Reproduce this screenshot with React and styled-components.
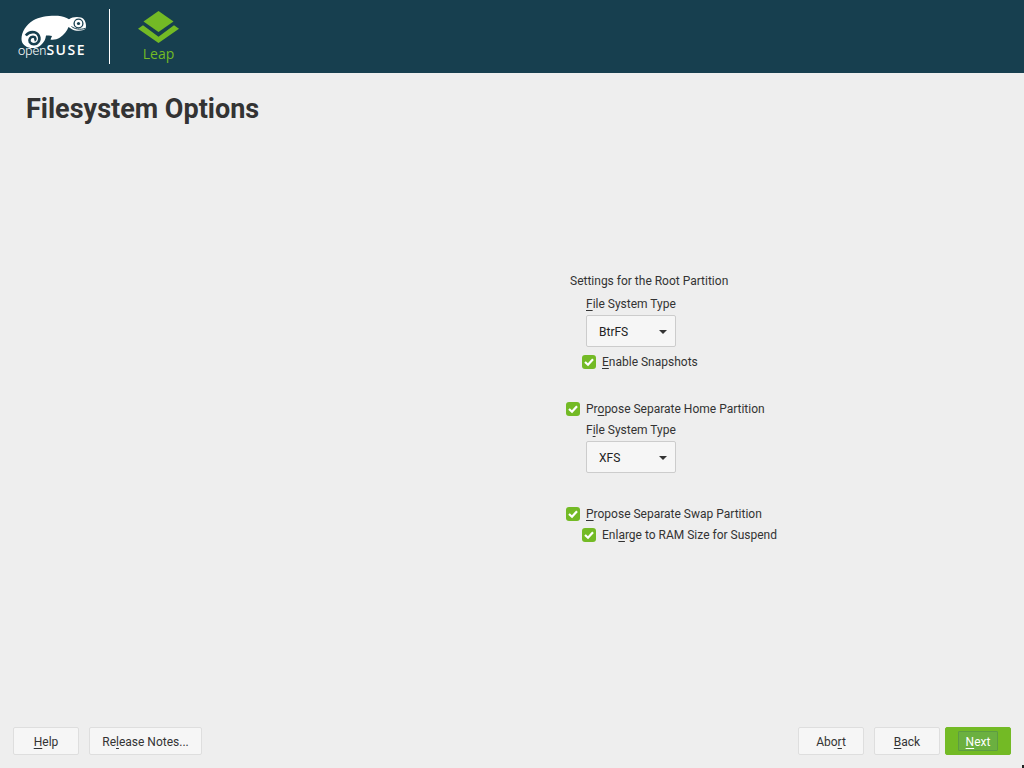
import React from "react";
import styled, { createGlobalStyle } from "styled-components";

const GlobalStyle = createGlobalStyle`
  html, body {
    margin: 0;
    padding: 0;
    background: #eeeeee;
  }
`;

const Page = styled.div`
  position: relative;
  width: 1024px;
  height: 768px;
  display: flex;
  flex-direction: column;
  overflow: hidden;
  background: #eeeeee;
  color: #333333;
  font-family: Roboto, "Liberation Sans", sans-serif;
  font-size: 12px;
`;

const Header = styled.header`
  height: 73px;
  flex: none;
  display: flex;
  align-items: center;
  background: #173f4f;
`;

const SuseLogo = styled.div`
  position: relative;
  width: 109px;
  height: 73px;
  flex: none;
`;

const LogoText = styled.span`
  position: absolute;
  left: 18px;
  top: 43px;
  color: #fff;
  font-size: 13px;
  font-weight: 300;
  line-height: 14px;
  white-space: nowrap;
`;

const SuseBold = styled.b`
  font-family: "Open Sans", sans-serif;
  font-size: 14px;
  font-weight: 600;
  letter-spacing: 1.5px;
`;

const Divider = styled.div`
  width: 1px;
  height: 55px;
  margin-top: -1px;
  background: #fff;
`;

const LeapLogo = styled.div`
  width: 41px;
  margin: 1px 0 0 28px;
  display: flex;
  flex-direction: column;
  align-items: center;
`;

const LeapText = styled.span`
  color: #73ba25;
  font-family: "Open Sans", sans-serif;
  font-size: 14px;
  line-height: 18px;
  margin-top: 2px;
`;

const Title = styled.h1`
  margin: 0;
  padding: 20px 26px 0;
  height: 52px;
  flex: none;
  color: #333333;
  font-size: 27px;
  font-weight: 700;
  line-height: 32px;
`;

const Main = styled.main`
  flex: 1;
  padding: 126px 0 0 566px;
`;

const Section = styled.section`
  display: flex;
  flex-direction: column;
  margin-top: ${(props) => props.top || 0}px;
`;

const Plain = styled.div`
  height: 20px;
  line-height: 20px;
  margin-top: ${(props) => props.top || 0}px;
  padding-left: ${(props) => props.indent || 0}px;
  white-space: nowrap;
`;

const Combo = styled.div`
  box-sizing: border-box;
  width: 90px;
  height: 32px;
  margin: 1px 0 0 20px;
  padding: 1px 12px 0;
  display: flex;
  align-items: center;
  justify-content: space-between;
  background: #f6f6f6;
  border: 1px solid #cccccc;
  border-radius: 2px;
  color: #222222;
`;

const Caret = styled.span`
  width: 0;
  height: 0;
  margin-right: -4px;
  border-left: 4px solid transparent;
  border-right: 4px solid transparent;
  border-top: 4px solid #333333;
`;

const CheckRow = styled.div`
  height: 20px;
  margin-top: ${(props) => props.top || 0}px;
  padding-left: ${(props) => props.indent || 0}px;
  display: flex;
  align-items: center;
  gap: 6px;
  white-space: nowrap;
`;

const Box = styled.span`
  width: 14px;
  height: 14px;
  flex: none;
  display: flex;
  align-items: center;
  justify-content: center;
  border-radius: 3px;
  background: #73ba25;
`;

const Key = styled.span`
  text-decoration: underline;
  text-underline-offset: 2px;
`;

const Footer = styled.footer`
  flex: none;
  display: flex;
  align-items: center;
  padding: 0 13px 13px;
`;

const Button = styled.button`
  box-sizing: border-box;
  height: 28px;
  width: ${(props) => props.w}px;
  margin-left: ${(props) => props.gap || 0}px;
  padding: 1px 0 0;
  display: flex;
  align-items: center;
  justify-content: center;
  background: #f6f6f6;
  border: 1px solid #dedede;
  border-radius: 2px;
  color: #333333;
  font: inherit;
`;

const Primary = styled(Button)`
  padding: 0;
  background: #73ba25;
  border-color: #73ba25;
  color: #ffffff;
`;

const FocusRect = styled.span`
  box-sizing: border-box;
  width: 40px;
  height: 20px;
  padding-top: 1px;
  display: flex;
  align-items: center;
  justify-content: center;
  background: #6bb040;
  border: 1px solid #5d9c42;
  border-radius: 1px;
`;

const Spacer = styled.div`
  flex: 1;
`;

// mouse pointer tip left in the bottom right corner of the screen
const PointerTip = styled.span`
  position: absolute;
  right: 0;
  bottom: 0;
  width: 2px;
  height: 3px;
  background: #222222;
`;

const Check = () => (
  <svg width="10" height="10" viewBox="0 0 10 10">
    <path d="M1 5 L4 7.8 L9 2.2" fill="none" stroke="#fff" strokeWidth="2.2" />
  </svg>
);

const Chameleon = () => (
  <svg width="109" height="73" viewBox="0 0 109 73">
    <path
      fill="#fff"
      d="M21.5 39 C21.5 32 26 25 33 20.5 C40 16.5 50 15.3 58 15.8 C62.5 16 66 17.5 69 19.3 C72 17 77 16.3 81 17.5 C84.5 18.8 86 22 86 26 C86 28 85 29.5 83.5 30 C80 31.3 75 31 72 29.3 L68.5 27 C67 31 64 35 60 37.5 C57 39.5 53 40 50.5 39.5 L52 36 C50 35.5 48 35.5 46 35.5 C45.5 39 44.5 41.5 42 44 C39 47.5 34.5 48.5 30.5 48 C25.5 47 21.5 44 21.5 39 Z"
    />
    <path
      fill="none"
      stroke="#173f4f"
      strokeWidth="2.6"
      d="M34.5 40.5 C36 40 35.8 37 33.5 36.8 C30.3 36.4 28.6 39.7 29.8 42.2 C31.5 45 36.3 45 38.3 42 C40.8 38.5 38.8 33.3 34.5 32.3 C31 31.6 27.8 33 25.8 35.5"
    />
    <circle cx="78.5" cy="23.5" r="4.4" fill="#fff" stroke="#173f4f" strokeWidth="1.3" />
    <circle cx="78.5" cy="23.5" r="1.6" fill="#173f4f" />
    <path fill="none" stroke="#173f4f" strokeWidth="1" d="M71.5 26.5 C74.5 29 80 30 85 28.5" />
  </svg>
);

const LeapMark = () => (
  <svg width="41" height="32" viewBox="139 11 41 32">
    <path fill="#73ba25" d="M159.5 11 L174.5 21.5 L159.5 32 L144.5 21.5 Z" />
    <path fill="#73ba25" d="M139 28.7 L144 25.3 L159.5 36.7 L175 25.3 L180 28.7 L159.5 43 Z" />
  </svg>
);

const App = () => {
  return (
    <Page>
      <GlobalStyle />
      <Header>
        <SuseLogo>
          <Chameleon />
          <LogoText>
            open<SuseBold>SUSE</SuseBold>
          </LogoText>
        </SuseLogo>
        <Divider />
        <LeapLogo>
          <LeapMark />
          <LeapText>Leap</LeapText>
        </LeapLogo>
      </Header>
      <Title>Filesystem Options</Title>
      <Main>
        <Section>
          <Plain indent={4}>Settings for the Root Partition</Plain>
          <Plain indent={20} top={3}>
            <Key>F</Key>ile System Type
          </Plain>
          <Combo>
            BtrFS
            <Caret />
          </Combo>
          <CheckRow indent={16} top={5}>
            <Box>
              <Check />
            </Box>
            <span>
              <Key>E</Key>nable Snapshots
            </span>
          </CheckRow>
        </Section>
        <Section top={27}>
          <CheckRow>
            <Box>
              <Check />
            </Box>
            <span>
              Pr<Key>o</Key>pose Separate Home Partition
            </span>
          </CheckRow>
          <Plain indent={20} top={1}>
            F<Key>i</Key>le System Type
          </Plain>
          <Combo>
            XFS
            <Caret />
          </Combo>
        </Section>
        <Section top={31}>
          <CheckRow>
            <Box>
              <Check />
            </Box>
            <span>
              <Key>P</Key>ropose Separate Swap Partition
            </span>
          </CheckRow>
          <CheckRow indent={16} top={1}>
            <Box>
              <Check />
            </Box>
            <span>
              Enl<Key>a</Key>rge to RAM Size for Suspend
            </span>
          </CheckRow>
        </Section>
      </Main>
      <Footer>
        <Button w={66}>
          <span>
            <Key>H</Key>elp
          </span>
        </Button>
        <Button w={113} gap={10}>
          <span>
            Re<Key>l</Key>ease Notes...
          </span>
        </Button>
        <Spacer />
        <Button w={66}>
          <span>
            Abo<Key>r</Key>t
          </span>
        </Button>
        <Button w={66} gap={10}>
          <span>
            <Key>B</Key>ack
          </span>
        </Button>
        <Primary w={66} gap={5}>
          <FocusRect>
            <span>
              <Key>N</Key>ext
            </span>
          </FocusRect>
        </Primary>
      </Footer>
      <PointerTip />
    </Page>
  );
};

export default App;
